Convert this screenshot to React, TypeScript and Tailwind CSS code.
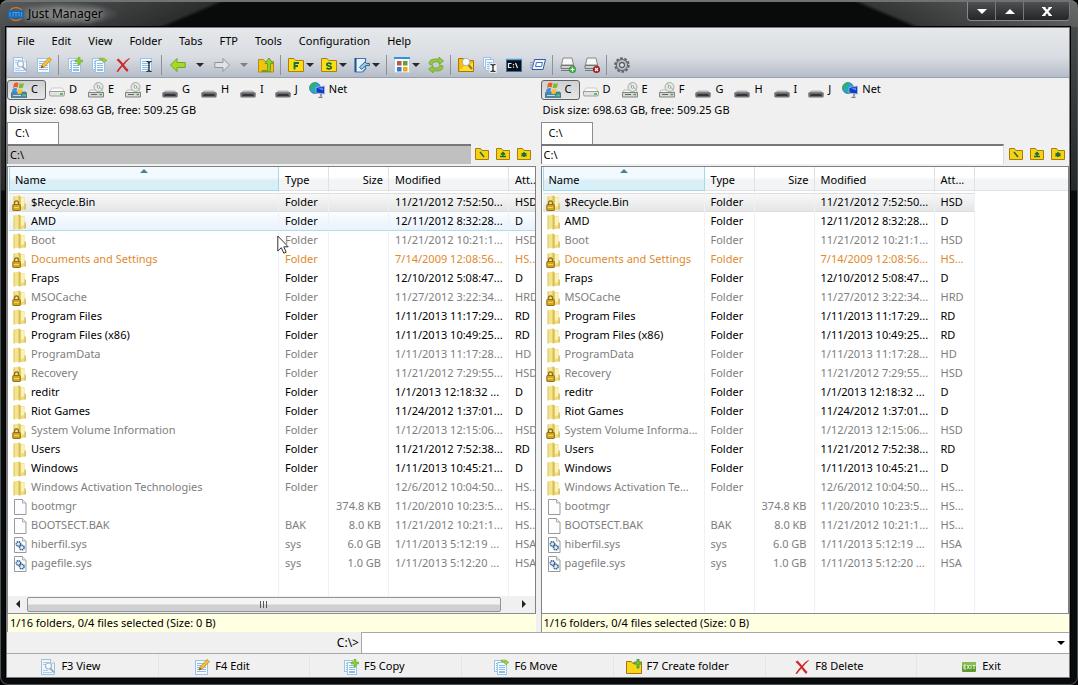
import { useState } from "react";
import type { ReactNode } from "react";

type Tone = "normal" | "hidden" | "link";
type Kind = "folder" | "locked" | "file" | "sys";

interface Entry {
  name: string;
  short?: string;
  kind: Kind;
  type: string;
  size: string;
  modified: string;
  attr: string;
  tone: Tone;
}

const ENTRIES: Entry[] = [
  { name: "$Recycle.Bin", kind: "locked", type: "Folder", size: "", modified: "11/21/2012 7:52:50...", attr: "HSD", tone: "normal" },
  { name: "AMD", kind: "folder", type: "Folder", size: "", modified: "12/11/2012 8:32:28...", attr: "D", tone: "normal" },
  { name: "Boot", kind: "folder", type: "Folder", size: "", modified: "11/21/2012 10:21:1...", attr: "HSD", tone: "hidden" },
  { name: "Documents and Settings", kind: "locked", type: "Folder", size: "", modified: "7/14/2009 12:08:56...", attr: "HS...", tone: "link" },
  { name: "Fraps", kind: "folder", type: "Folder", size: "", modified: "12/10/2012 5:08:47...", attr: "D", tone: "normal" },
  { name: "MSOCache", kind: "locked", type: "Folder", size: "", modified: "11/27/2012 3:22:34...", attr: "HRD", tone: "hidden" },
  { name: "Program Files", kind: "folder", type: "Folder", size: "", modified: "1/11/2013 11:17:29...", attr: "RD", tone: "normal" },
  { name: "Program Files (x86)", kind: "folder", type: "Folder", size: "", modified: "1/11/2013 10:49:25...", attr: "RD", tone: "normal" },
  { name: "ProgramData", kind: "folder", type: "Folder", size: "", modified: "1/11/2013 11:17:28...", attr: "HD", tone: "hidden" },
  { name: "Recovery", kind: "locked", type: "Folder", size: "", modified: "11/21/2012 7:29:55...", attr: "HSD", tone: "hidden" },
  { name: "reditr", kind: "folder", type: "Folder", size: "", modified: "1/1/2013 12:18:32 ...", attr: "D", tone: "normal" },
  { name: "Riot Games", kind: "folder", type: "Folder", size: "", modified: "11/24/2012 1:37:01...", attr: "D", tone: "normal" },
  { name: "System Volume Information", short: "System Volume Informa...", kind: "locked", type: "Folder", size: "", modified: "1/12/2013 12:15:06...", attr: "HSD", tone: "hidden" },
  { name: "Users", kind: "folder", type: "Folder", size: "", modified: "11/21/2012 7:52:38...", attr: "RD", tone: "normal" },
  { name: "Windows", kind: "folder", type: "Folder", size: "", modified: "1/11/2013 10:45:21...", attr: "D", tone: "normal" },
  { name: "Windows Activation Technologies", short: "Windows Activation Te...", kind: "folder", type: "Folder", size: "", modified: "12/6/2012 10:04:50...", attr: "HS...", tone: "hidden" },
  { name: "bootmgr", kind: "file", type: "", size: "374.8 KB", modified: "11/20/2010 10:23:5...", attr: "HS...", tone: "hidden" },
  { name: "BOOTSECT.BAK", kind: "file", type: "BAK", size: "8.0 KB", modified: "11/21/2012 10:21:1...", attr: "HS...", tone: "hidden" },
  { name: "hiberfil.sys", kind: "sys", type: "sys", size: "6.0 GB", modified: "1/11/2013 5:12:19 ...", attr: "HSA", tone: "hidden" },
  { name: "pagefile.sys", kind: "sys", type: "sys", size: "1.0 GB", modified: "1/11/2013 5:12:20 ...", attr: "HSA", tone: "hidden" },
];

const TONES: Record<Tone, string> = {
  normal: "text-black",
  hidden: "text-[#7e7e7e]",
  link: "text-[#e08a2c]",
};

function Svg({ children }: { children: ReactNode }) {
  return (
    <svg viewBox="0 0 16 16" className="size-4 shrink-0" aria-hidden="true">
      {children}
    </svg>
  );
}

function Sheet({ x = 1, y = 1, w = 12, h = 14 }: { x?: number; y?: number; w?: number; h?: number }) {
  return (
    <g>
      <rect x={x + 0.5} y={y + 0.5} width={w - 1} height={h - 1} fill="#f4faff" stroke="#9cc3e4" />
      <path
        d={`M${x + 2} ${y + 3.5}h${w - 4}M${x + 2} ${y + 5.5}h${w - 4}M${x + 2} ${y + 7.5}h${w - 4}M${x + 2} ${y + 9.5}h${w - 4}`}
        stroke="#8fbce4"
        strokeWidth="1"
      />
    </g>
  );
}

const ViewIcon = () => (
  <Svg>
    <path d="M1.500.500h9l4 3.500v11.500h-13z" fill="#eef6fd" stroke="#9dc0df" />
    <path d="M3 3.500h6M3 5.500h3M3 11.500h5M3 13.500h9" stroke="#a8cceb" />
    <circle cx="8.500" cy="7" r="3" fill="#f7fbff" stroke="#a3b4c5" strokeWidth="1.200" />
    <path d="m10.500 9.500 3.500 4" stroke="#93a4b5" strokeWidth="1.800" />
    <path d="M10.500.500v3.500h4" fill="#fff" stroke="#9dc0df" />
  </Svg>
);

const EditIcon = () => (
  <Svg>
    <Sheet x={1} y={1} w={13} h={15} />
    <path d="M3 12.500h9" stroke="#8fbce4" />
    <path d="m5 11 1-3 7-7.500 2.500 2.200L8 10z" fill="#f5c033" stroke="#c98b1a" strokeWidth=".8" />
    <path d="m5 11 .8-2.500L7.500 10z" fill="#6b4a1d" />
  </Svg>
);

const CopyIcon = () => (
  <Svg>
    <Sheet x={1} y={1} w={9} h={12} />
    <Sheet x={4} y={3} w={10} h={13} />
    <path d="M6 13.500h6" stroke="#8fbce4" />
    <path d="M11 0h2v3h3v2h-3v3h-2V5H8V3h3z" fill="#8ccf2b" stroke="#69a51c" strokeWidth=".5" />
  </Svg>
);

const MoveIcon = () => (
  <Svg>
    <Sheet x={1} y={1} w={9} h={12} />
    <Sheet x={4} y={3} w={10} h={13} />
    <path d="M6 13.500h6" stroke="#8fbce4" />
    <path d="M8 1h4q2.500 0 2.500 2H16l-3 3-2.500-3H12q0-.5-1-.5H8z" fill="#9bcf4a" stroke="#74a52d" strokeWidth=".5" />
  </Svg>
);

const DeleteIcon = () => (
  <Svg>
    <path d="M1.500 3 3.500 1.500Q6 4 8 6.500 11 2.500 14.500 1l.5.500Q11.500 4.500 9 8q2.500 3 4.500 5L12 15q-2.500-2.500-4.500-5.500-2.500 2.500-4.500 5.500l-1.500-.5Q4 10.500 6.500 8 4 5 1.500 3z" fill="#cf2a27" />
  </Svg>
);

const RenameIcon = () => (
  <Svg>
    <Sheet x={1} y={1} w={12} h={14} />
    <path d="M3 12.500h7" stroke="#8fbce4" />
    <path d="M7.500 4.500q2 0 2.500 1 .5-1 2.500-1M10 5v9M7.500 14.500q2 0 2.500-1 .5 1 2.500 1" fill="none" stroke="#111" strokeWidth="1.200" />
  </Svg>
);

const MultiRenameIcon = () => (
  <Svg>
    <Sheet x={1} y={0} w={8} h={11} />
    <Sheet x={3} y={2} w={9} h={12} />
    <rect x="7" y="6" width="8" height="10" fill="#f5f7fa" stroke="#b8c4d0" strokeWidth=".6" />
    <path d="M8.500 7.500q1.800 0 2.500.8.700-.8 2.500-.8M11 8v6M8.500 14.500q1.800 0 2.500-.8.700.8 2.500.8" fill="none" stroke="#111" strokeWidth="1.200" />
  </Svg>
);

const ArrowIcon = ({ forward = false }: { forward?: boolean }) => (
  <Svg>
    {forward ? (
      <path d="M15.500 8 9 1.500v4H.8v5H9v4z" fill="#dfe3e6" stroke="#8f9499" />
    ) : (
      <path d="M.5 8 7 1.500v4h8.200v5H7v4z" fill="#a5d928" stroke="#75a51c" />
    )}
  </Svg>
);

const UpIcon = () => (
  <Svg>
    <path d="M.5 2.500h5l1.500 2h8.500v10.500H.5z" fill="#f1c50f" stroke="#b98c12" />
    <path d="M4 13.500h5.500v-7H7L11 1l4 5.500h-2.500v8H4z" fill="#8ed02c" stroke="#5c951a" strokeWidth=".8" />
  </Svg>
);

const LetterFolder = ({ star = false }: { star?: boolean }) => (
  <Svg>
    <path d="M.5 1.500h5.500l1.500 2h8v11H.5z" fill="#fbdf12" stroke="#ad7e13" />
    {star ? (
      <path d="M10.500 7.300Q8.500 5.500 6.500 6.500q-1.300 1 0 2l3 1q1.500 1 0 2-2 1-4-.5" fill="none" stroke="#14703f" strokeWidth="1.800" />
    ) : (
      <path d="M6.500 12.500V6H11M6.500 9h3.500" fill="none" stroke="#14703f" strokeWidth="1.800" />
    )}
  </Svg>
);

const BookIcon = () => (
  <Svg>
    <path d="M1.500 1.500h10v10.500l-3 3h-7z" fill="#e6f1fb" stroke="#3f78b0" strokeWidth="1.200" />
    <path d="M1.500 1v14" stroke="#1e568f" strokeWidth="2" />
    <path d="m5.500 10 2 2.500L12 8.500h3.500V6.500h-3L11 5z" fill="#9cc8ea" stroke="#306792" />
  </Svg>
);

const GridIcon = () => (
  <Svg>
    <path d="M.5 1h15v14.500H.5z" fill="#f8fcff" stroke="#c3d2df" />
    <path d="M0 1h16" stroke="#2c94e8" strokeWidth="2" />
    <path d="M3 4h4.500v4.500H3z" fill="#c0563f" />
    <path d="M9 4h4.500v4.500H9z" fill="#6e9b2f" />
    <path d="M3 10h4.500v4.500H3z" fill="#3b76c4" />
    <path d="M9 10h4.500v4.500H9z" fill="#eea91d" />
  </Svg>
);

const RefreshIcon = () => (
  <Svg>
    <path d="M1 7q0-5 6-5h4V0l4.500 4L11 7.500V5H7Q4.500 5 4 8z" fill="#93c83e" stroke="#6a9b28" strokeWidth=".7" />
    <path d="M15 9q0 5-6 5H5v2L.5 12 5 8.500V11h4q2.500 0 3-3z" fill="#93c83e" stroke="#6a9b28" strokeWidth=".7" />
  </Svg>
);

const SearchIcon = () => (
  <Svg>
    <path d="M.5 1.500h5l1 2h9v11H.5z" fill="#f2bd0e" stroke="#a8760f" />
    <path d="m1 14 5-5 9-3v8z" fill="#fbe030" />
    <circle cx="8" cy="5" r="3.700" fill="#f5fcff" stroke="#b9b093" />
    <path d="m10.500 8 3.500 4" stroke="#a0762a" strokeWidth="2" />
  </Svg>
);

const ConsoleIcon = () => (
  <Svg>
    <rect x=".5" y="2.500" width="15" height="12" fill="#0a1015" stroke="#3b6f9d" />
    <path d="M0 2.500h16" stroke="#4aa1da" strokeWidth="1.500" />
    <path d="M5.500 6.500h-3v4h3M7.500 7v1.200M7.500 9.500v1.200M9.500 6l2 5" fill="none" stroke="#e3ecf2" strokeWidth="1.200" />
  </Svg>
);

const RunIcon = () => (
  <Svg>
    <path d="M4.500 2.500h11l-2.500 10H2z" fill="#eaf3ff" stroke="#335aa4" />
    <path d="M6.500 5.500h6l-1 4h-6z" fill="#fff" stroke="#4a6fb6" />
    <path d="M0 5.500h4M0 8h3M0 10.500h3" stroke="#8799b5" />
  </Svg>
);

const NetDriveIcon = ({ off = false }: { off?: boolean }) => (
  <Svg>
    <path d="M3 1h9l1.500 7h-12z" fill="#f7f7f7" stroke="#888" />
    <path d="M1 8.500h13v3H1z" fill="#cfd2d4" stroke="#777" />
    <path d="M1 13.500h10" stroke="#777" />
    <circle cx="12.500" cy="12.500" r="3.300" fill={off ? "#b01616" : "#3fb43b"} stroke={off ? "#770c0c" : "#277b27"} strokeWidth=".5" />
    {off ? (
      <path d="m11 11 3 3m0-3-3 3" stroke="#fff" strokeWidth="1.200" />
    ) : (
      <path d="M12.500 10.500v4M10.500 12.500h4" stroke="#fff" strokeWidth="1.200" />
    )}
  </Svg>
);

const GearIcon = () => (
  <Svg>
    <circle cx="8" cy="8" r="6.800" fill="none" stroke="#62686e" strokeWidth="2" strokeDasharray="2.700 1.570" />
    <circle cx="8" cy="8" r="5.600" fill="#bfc4c9" stroke="#656b70" strokeWidth="1.200" />
    <circle cx="8" cy="8" r="2.500" fill="#e4e7ea" stroke="#5c6166" strokeWidth="1.300" />
  </Svg>
);

const NewFolderIcon = () => (
  <Svg>
    <path d="M.5 2.500h5l1.500 2h8.500v10H.5z" fill="#f9d616" stroke="#a9740f" />
    <path d="M11 0h2v3h3v2h-3v4h-2V5H8V3h3z" fill="#7fc73a" stroke="#3d8a26" strokeWidth=".8" />
  </Svg>
);

const ExitIcon = () => (
  <Svg>
    <rect x="1" y="3" width="14" height="10" rx="1" fill="#5d9c2c" />
    <path d="M1 4q0-1 1-1h12q1 0 1 1v3H1z" fill="#86bd4e" />
    <path d="M5 6H3v4h2M3 8h2M6 6l2.500 4M8.500 6 6 10M10 6v4M11.500 6.500h3M13 6.500V10" fill="none" stroke="#f3faec" strokeWidth=".9" />
  </Svg>
);

const HardDisk = () => (
  <Svg>
    <path d="M3 6h10l2.500 4H.5z" fill="#fafafa" stroke="#b9bcb9" strokeWidth=".7" />
    <path d="M.5 9.500h15v3q0 1.500-1.500 1.500H2q-1.500 0-1.500-1.500z" fill="#e2e4e1" stroke="#898d88" strokeWidth=".8" />
    <path d="M11 12h3" stroke="#3cab37" strokeWidth="1.500" />
  </Svg>
);

const DiscDrive = () => (
  <Svg>
    <path d="M2 8h12l1.500 3H.5z" fill="#f4f4f4" stroke="#aaa" strokeWidth=".7" />
    <path d="M.5 10.500h15V15H.5z" fill="#d7d9d6" stroke="#777b76" strokeWidth=".9" />
    <path d="M3 12.500h6" stroke="#666" />
    <path d="M11.500 12.500h2.500" stroke="#3aa437" strokeWidth="1.400" />
    <circle cx="10.500" cy="5" r="4.500" fill="#e6e9e7" stroke="#979c98" strokeWidth=".8" />
    <path d="m10.500 5-2.500-4M10.500 5l4 2.500" stroke="#9fbf9d" />
    <circle cx="10.500" cy="5" r="1.300" fill="#fff" stroke="#8d918e" strokeWidth=".8" />
  </Svg>
);

const Removable = () => (
  <Svg>
    <path d="M3 8.500h10l2.500 3H.5z" fill="#b4b6b8" />
    <path d="M.3 11.500q0-1.300 1.200-1.300h13q1.200 0 1.200 1.300V14q0 1.500-1.500 1.500H1.800Q.3 15.500.3 14z" fill="#6c6e71" />
    <path d="M3 12h10l1 2H2z" fill="#333538" />
  </Svg>
);

const WindowsDisk = () => (
  <Svg>
    <path d="M1 10h14l1 3v2.500H0V13z" fill="#4b86a6" stroke="#345c73" strokeWidth=".6" />
    <path d="M2 13.500h8" stroke="#bfd9e5" />
    <path d="M11.500 13.500H15" stroke="#47dd4d" strokeWidth="1.500" />
    <path d="M3 1.500Q5.500 0 7.500 1L6.500 5.500Q4.500 4.500 2 6z" fill="#ed5b27" />
    <path d="M8.500 1.300q2.500 1 4.500-.3l-1 4.500q-2.500 1.300-4.500.3z" fill="#7dbb37" />
    <path d="M1.700 7Q4 5.500 6.200 6.500l-1 4.500Q3 10 .5 11.500z" fill="#3f90d7" />
    <path d="M7.200 7q2.500 1 4.500-.3l-1 4.500q-2.500 1.300-4.500.3z" fill="#fac02c" />
  </Svg>
);

const NetIcon = () => (
  <Svg>
    <circle cx="6" cy="6" r="5.500" fill="#26a3d8" stroke="#1b6d9f" strokeWidth=".7" />
    <path d="M1 4q2-3.500 6-3l-1 3-3 1-1 4Q.5 7 1 4zM6 7l3 1-1 3H5z" fill="#36b445" />
    <path d="M7 5.500 15.500 4v8L7 11z" fill="#123bc9" stroke="#a9bddd" strokeWidth=".8" />
    <path d="m9 6.500 5-1v3z" fill="#5287ef" />
    <path d="M12 12v2.500M9.500 15.500h4" stroke="#6c8293" strokeWidth="1.500" />
  </Svg>
);

function EntryIcon({ kind }: { kind: Kind }) {
  if (kind === "file" || kind === "sys") {
    return (
      <Svg>
        <path d="M2.500.500h8l3.500 3.500v11.500H2.500z" fill="#fdfdfd" stroke="#8c8f92" strokeWidth=".9" />
        <path d="M10.500.500v3.500H14" fill="#eee" stroke="#a3a6a9" strokeWidth=".9" />
        {kind === "sys" && (
          <g fill="#dcebf8" stroke="#35618f" strokeWidth="1.500">
            <circle cx="6.500" cy="7" r="2.200" strokeDasharray="1.400 .5" />
            <circle cx="9.800" cy="10.500" r="2.300" strokeDasharray="1.400 .5" />
          </g>
        )}
      </Svg>
    );
  }
  return (
    <Svg>
      <path d="M1.500 1.500 7 .5v14l-5.500 1z" fill="#f4e48f" />
      <path d="M1.500 1.500h1.500v13.700l-1.500.3z" fill="#e6d27a" />
      <path d="M7 2h5.500v12.500L7 15.500z" fill="#efdb7c" />
      <path d="M6.500.5 8.500 1v14l-2 .5z" fill="#d9be52" />
      <path d="M9 2.500h3V11L9 12z" fill="#fbf2b8" />
      <path d="M12.500 8q1.500 0 1.500 2v4.500h-2z" fill="#d9c366" />
      {kind === "locked" && (
        <g>
          <path d="M2.500 10V8q0-2.200 2-2.200t2 2.200v2" fill="none" stroke="#8b6f1c" strokeWidth="1.300" />
          <rect x=".8" y="9.500" width="7.500" height="6" rx=".5" fill="#d5a51d" stroke="#886816" strokeWidth=".9" />
          <path d="M2 12.500h5" stroke="#f4d568" />
        </g>
      )}
    </Svg>
  );
}

function Caret({ className = "text-[#26292d]" }: { className?: string }) {
  return (
    <svg viewBox="0 0 8 4" className={`h-1 w-2 shrink-0 ${className}`} aria-hidden="true">
      <path d="M0 0h8L4 4z" fill="currentColor" />
    </svg>
  );
}

function Tool({ label, children, menu = false }: { label: string; children: ReactNode; menu?: boolean }) {
  return (
    <button
      type="button"
      aria-label={label}
      className={
        menu
          ? "flex h-6 w-[33px] items-center gap-[2px] pl-[3px]"
          : "flex h-6 w-6 items-center justify-center"
      }
    >
      {children}
      {menu && <Caret />}
    </button>
  );
}

function Divider({ tight = false }: { tight?: boolean }) {
  return <span className={`ml-[2px] h-5 w-px bg-[#8d9299] ${tight ? "mr-[3px]" : "mr-1"}`} />;
}

function CaretTool({ label, muted = false }: { label: string; muted?: boolean }) {
  return (
    <button type="button" aria-label={label} className="flex h-6 w-5 items-center justify-center">
      {muted ? <Caret className="text-[#7d8185]" /> : <Caret />}
    </button>
  );
}

const MENUS = ["File", "Edit", "View", "Folder", "Tabs", "FTP", "Tools", "Configuration", "Help"];

function TitleBar() {
  const button = "flex h-[18px] items-center justify-center border-r border-[#77797b]";
  return (
    <header className="flex h-[27px] shrink-0 items-start justify-between rounded-t-lg border-t-2 border-[#6f7373] bg-[#090a0a] bg-[linear-gradient(157deg,#585b5b_0,#2c2e2e_84px,transparent_88px),linear-gradient(203deg,#6a6c6c_0,#343636_84px,transparent_88px)] pl-2">
      <div className="flex h-6 items-center gap-1 rounded-full bg-[radial-gradient(closest-side,rgba(150,152,152,0.7),rgba(130,132,132,0.5)_60%,transparent)] pr-4">
        <svg viewBox="0 0 16 16" className="size-4" aria-hidden="true">
          <path d="M2 4Q8-1 14 4M2 12q6 5 12 0" fill="none" stroke="#c8782e" strokeWidth="1.500" />
          <rect y="4" width="16" height="8.500" rx="1" fill="#1769b4" />
          <path d="M2 6v4.500M5 10.500V6.500h3v4M8 6.500h3v4M13.500 6v4.500" fill="none" stroke="#4f97d2" strokeWidth="1.200" />
        </svg>
        <h1 className="text-xs text-black [text-shadow:0_0_5px_#aaa,0_0_8px_#999]">Just Manager</h1>
      </div>
      <div className="mr-2 flex rounded-b border-b border-l border-[#88898b] bg-linear-to-b from-[#4e5051] to-[#242627]">
        <button type="button" aria-label="Minimize" className={`${button} w-7`}>
          <svg viewBox="0 0 10 5" className="h-[5px] w-[10px]" aria-hidden="true">
            <path d="M0 0h10L5 5z" fill="#fff" />
          </svg>
        </button>
        <button type="button" aria-label="Maximize" className={`${button} w-7`}>
          <svg viewBox="0 0 10 5" className="h-[5px] w-[10px]" aria-hidden="true">
            <path d="M0 5h10L5 0z" fill="#fff" />
          </svg>
        </button>
        <button type="button" aria-label="Close" className={`${button} w-[46px] rounded-br`}>
          <svg viewBox="0 0 10 9" className="h-[9px] w-[10px]" aria-hidden="true">
            <path d="m1.500.500 7 8m0-8-7 8" stroke="#fff" strokeWidth="2.300" />
            <path d="M0 .5h3.500M6.500.500H10M0 8.500h3.500M6.500 8.500H10" stroke="#fff" />
          </svg>
        </button>
      </div>
    </header>
  );
}

function Toolbar() {
  return (
    <div className="flex h-6 shrink-0 items-center pl-px">
      <Tool label="View file"><ViewIcon /></Tool>
      <Tool label="Edit file"><EditIcon /></Tool>
      <Divider />
      <Tool label="Copy"><CopyIcon /></Tool>
      <Tool label="Move"><MoveIcon /></Tool>
      <Tool label="Delete"><DeleteIcon /></Tool>
      <Tool label="Rename"><RenameIcon /></Tool>
      <Divider />
      <Tool label="Back"><ArrowIcon /></Tool>
      <CaretTool label="Back history" />
      <Tool label="Forward"><ArrowIcon forward /></Tool>
      <CaretTool label="Forward history" muted />
      <Tool label="Parent folder"><UpIcon /></Tool>
      <Divider />
      <Tool label="Favorites" menu><LetterFolder /></Tool>
      <Tool label="Special folders" menu><LetterFolder star /></Tool>
      <Tool label="Sessions" menu><BookIcon /></Tool>
      <Divider />
      <Tool label="View mode" menu><GridIcon /></Tool>
      <Tool label="Refresh"><RefreshIcon /></Tool>
      <Divider tight />
      <Tool label="Search"><SearchIcon /></Tool>
      <Tool label="Multi-rename"><MultiRenameIcon /></Tool>
      <Tool label="Command prompt"><ConsoleIcon /></Tool>
      <Tool label="Run"><RunIcon /></Tool>
      <Divider tight />
      <Tool label="Map network drive"><NetDriveIcon /></Tool>
      <Tool label="Disconnect network drive"><NetDriveIcon off /></Tool>
      <Divider tight />
      <Tool label="Settings"><GearIcon /></Tool>
    </div>
  );
}

const DRIVES: { name: string; icon: ReactNode }[] = [
  { name: "D", icon: <HardDisk /> },
  { name: "E", icon: <DiscDrive /> },
  { name: "F", icon: <DiscDrive /> },
  { name: "G", icon: <Removable /> },
  { name: "H", icon: <Removable /> },
  { name: "I", icon: <Removable /> },
  { name: "J", icon: <Removable /> },
  { name: "Net", icon: <NetIcon /> },
];

function Drives() {
  return (
    <div className="flex h-[23px] shrink-0 items-center gap-[11px]">
      <button
        type="button"
        aria-pressed="true"
        className="-mr-2 flex h-5 w-[39px] items-center gap-1 rounded-[3px] border border-[#5f6163] bg-linear-to-b from-[#cfd0d1] to-[#e6e6e6] pl-[3px]"
      >
        <WindowsDisk />
        C
      </button>
      {DRIVES.map((drive) => (
        <button type="button" key={drive.name} className="flex items-center gap-1">
          {drive.icon}
          {drive.name}
        </button>
      ))}
    </div>
  );
}

function PathButton({ label, d }: { label: string; d: string }) {
  return (
    <button type="button" aria-label={label} className="flex w-[21px] items-center justify-center">
      <svg viewBox="0 0 14 12" className="h-3 w-[14px]" aria-hidden="true">
        <path d="M.5.500h5l1.500 2h6.500v9H.5z" fill="#f5d313" stroke="#a87d10" />
        <path d={d} fill="none" stroke="#1a6b3d" strokeWidth="1.500" />
      </svg>
    </button>
  );
}

function FileTable({ narrow }: { narrow: boolean }) {
  const head = "border-r border-b border-[#dfe1e4] bg-linear-to-b from-white from-45% to-[#f3f4f6] to-55% pt-[3px] pl-[6px] text-left font-normal whitespace-nowrap";
  const cell = "overflow-hidden border-r border-[#eef1f5] whitespace-nowrap";
  return (
    <table className={narrow ? "w-full table-fixed border-separate border-spacing-0" : "w-[568px] table-fixed border-separate border-spacing-0"}>
      <colgroup>
        <col className={narrow ? "w-[162px]" : "w-[270px]"} />
        <col className="w-[50px]" />
        <col className="w-[60px]" />
        <col className="w-[120px]" />
        <col className="w-10" />
        <col />
      </colgroup>
      <thead>
        <tr className="h-6">
          <th
            scope="col"
            aria-sort="ascending"
            className="relative border-x border-b border-[#a3d8ec] bg-linear-to-b from-[#f3fafd] from-45% to-[#d9eff8] to-60% px-[5px] pt-[3px] text-left font-normal"
          >
            Name
            <svg viewBox="0 0 8 4" className="absolute top-[2px] left-1/2 h-1 w-2 -translate-x-1/2" aria-hidden="true">
              <path d="M0 4h8L4 0z" fill="#4a7f95" />
            </svg>
          </th>
          <th scope="col" className={head}>Type</th>
          <th scope="col" className={head}>
            <span className="block pr-[5px] text-right">Size</span>
          </th>
          <th scope="col" className={head}>Modified</th>
          <th scope="col" className={head}>Att...</th>
          <td className="border-b border-[#dfe1e4] bg-linear-to-b from-white from-45% to-[#f3f4f6] to-55%" />
        </tr>
      </thead>
      <tbody>
        <tr className="h-[2px]">
          {[0, 1, 2, 3, 4].map((n) => (
            <td key={n} className="border-r border-[#eef1f5]" />
          ))}
          <td />
        </tr>
        {ENTRIES.map((entry, row) => {
          const mark =
            row === 0
              ? "border-y border-y-[#dedede] bg-linear-to-b from-[#f8f8f8] to-[#e4e5e6]"
              : row === 1 && !narrow
                ? "border-y border-t-[#fafcff] border-b-[#b4dcec] bg-linear-to-b from-[#fafcff] to-[#eaf2fc]"
                : "";
          return (
            <tr key={entry.name} className={`h-[19px] ${TONES[entry.tone]}`}>
              <td className={`${cell} pl-[3px] ${mark}`}>
                <span className="flex items-center gap-[3px]">
                  <EntryIcon kind={entry.kind} />
                  {narrow && entry.short ? entry.short : entry.name}
                </span>
              </td>
              <td className={`${cell} pl-[6px] ${mark}`}>{entry.type}</td>
              <td className={`${cell} pr-[7px] text-right ${mark}`}>{entry.size}</td>
              <td className={`${cell} pl-[6px] ${mark}`}>{entry.modified}</td>
              <td className={`${cell} pl-[6px] ${mark}`}>{entry.attr}</td>
              <td />
            </tr>
          );
        })}
        <tr>
          {[0, 1, 2, 3, 4].map((n) => (
            <td key={n} className="border-r border-[#eef1f5]" />
          ))}
          <td />
        </tr>
      </tbody>
    </table>
  );
}

function Scrollbar() {
  return (
    <div className="flex h-[17px] shrink-0 items-center bg-[#f0f0f0] pb-px">
      <button type="button" aria-label="Scroll left" className="flex w-[19px] justify-center">
        <svg viewBox="0 0 4 8" className="h-2 w-1" aria-hidden="true"><path d="M4 0v8L0 4z" fill="#222" /></svg>
      </button>
      <div className="flex h-[15px] flex-1 items-center justify-center gap-[2px] rounded-[2px] border border-[#919395] bg-linear-to-b from-[#f4f4f4] from-45% to-[#cfd0d2] to-55%">
        <span className="h-[7px] w-px bg-[#55585b]" />
        <span className="h-[7px] w-px bg-[#55585b]" />
        <span className="h-[7px] w-px bg-[#55585b]" />
      </div>
      <button type="button" aria-label="Scroll right" className="ml-3 flex w-[22px] justify-center">
        <svg viewBox="0 0 4 8" className="h-2 w-1" aria-hidden="true"><path d="M0 0v8l4-4z" fill="#222" /></svg>
      </button>
    </div>
  );
}

interface PaneProps {
  id: string;
  narrow?: boolean;
  active?: boolean;
}

function Pane({ id, narrow = false, active = false }: PaneProps) {
  const [path, setPath] = useState("C:\\");
  return (
    <section className="flex min-w-0 flex-1 flex-col">
      <Drives />
      <p className="h-[21px] shrink-0 pl-[2px] leading-[18px]">Disk size: 698.63 GB, free: 509.25 GB</p>
      <div className="flex h-[22px] shrink-0">
        <button type="button" className="w-[52px] border border-b-0 border-[#8b8d90] bg-white pl-[7px] text-left">
          C:\
        </button>
      </div>
      <div className="mb-[2px] flex h-5 shrink-0">
        <input
          id={id}
          aria-label="Path"
          value={path}
          onChange={(event) => setPath(event.target.value)}
          className={`min-w-0 flex-1 border-t-2 border-l border-[#75777a] pl-[2px] outline-none ${active ? "bg-[#c0c0c0]" : "border-r border-r-[#dcdcdc] bg-white"}`}
        />
        <div className="mx-px flex">
          <PathButton label="Browse" d="m5 4 4 5" />
          <PathButton label="Parent" d="M4 8.500h6M7 8.500V4.500M5 6.500l2-2 2 2" />
          <PathButton label="Favorite" d="M7 4v5M4.500 5.500l5 2.500M9.500 5.500l-5 2.500" />
        </div>
      </div>
      <div className="flex min-h-0 flex-1 flex-col border border-[#7e8083] border-b-[#8a8c8f] bg-white">
        <div className="grid min-h-0 flex-1 overflow-hidden pl-px">
          <FileTable narrow={narrow} />
        </div>
        {!narrow && <Scrollbar />}
      </div>
      <p className="h-[18px] shrink-0 border-l border-[#8b8d90] bg-[#ffffe1] pl-[2px] leading-[18px]">
        1/16 folders, 0/4 files selected (Size: 0 B)
      </p>
    </section>
  );
}

const ACTIONS: { label: string; icon: ReactNode }[] = [
  { label: "F3 View", icon: <ViewIcon /> },
  { label: "F4 Edit", icon: <EditIcon /> },
  { label: "F5 Copy", icon: <CopyIcon /> },
  { label: "F6 Move", icon: <MoveIcon /> },
  { label: "F7 Create folder", icon: <NewFolderIcon /> },
  { label: "F8 Delete", icon: <DeleteIcon /> },
  { label: "Exit", icon: <ExitIcon /> },
];

export default function App() {
  const [command, setCommand] = useState("");
  return (
    <div className="relative h-screen min-h-[600px] overflow-hidden bg-black font-['Noto_Sans','Open_Sans',sans-serif] text-[11px] text-black">
      <div className="flex h-full flex-col rounded-lg bg-[linear-gradient(#4c4e4e,#26282a_190px,#0a0b0c_191px)] inset-ring inset-ring-[#505355]">
        <TitleBar />
        <main className="mr-2 mb-[7px] ml-[6px] flex min-h-0 flex-1 flex-col border border-[#7b7e80] bg-[#f0f0f0] outline outline-black">
          <div className="shrink-0 border-b border-[#98a1ab] bg-linear-to-b from-[#e6e8ea] via-[#d8dce2] via-60% to-[#b5bdc8] pt-px">
            <nav className="flex h-6 items-center gap-[17px] pl-[10px]">
              {MENUS.map((menu) => (
                <button type="button" key={menu}>{menu}</button>
              ))}
            </nav>
            <Toolbar />
          </div>
          <div className="flex min-h-0 flex-1 gap-[5px]">
            <Pane id="left-path" active />
            <Pane id="right-path" narrow />
          </div>
          <div className="flex h-[22px] shrink-0 border-b border-[#a5a7a9]">
            <label htmlFor="command" className="w-1/3 pr-[2px] text-right text-xs leading-[21px]">C:\&gt;</label>
            <input
              id="command"
              value={command}
              onChange={(event) => setCommand(event.target.value)}
              className="min-w-0 flex-1 border-t border-l border-[#a5a7a9] bg-white px-1 outline-none"
            />
            <button type="button" aria-label="Command history" className="flex w-4 items-center justify-center border-t border-[#a5a7a9] bg-white">
              <Caret className="text-black" />
            </button>
          </div>
          <footer className="grid h-[23px] shrink-0 grid-cols-7">
            {ACTIONS.map((action) => (
              <button
                type="button"
                key={action.label}
                className="flex items-center justify-center gap-[5px] border-r border-[#e6e6e6] pt-[2px] pr-6 last:border-r-0"
              >
                {action.icon}
                {action.label}
              </button>
            ))}
          </footer>
        </main>
      </div>
      <svg viewBox="0 0 12 19" className="pointer-events-none absolute top-[235px] left-[277px] h-[19px] w-3" aria-hidden="true">
        <path d="M.8 1v15l3.500-3.300 2.500 5.500 2.400-1-2.400-5.400h4.400z" fill="#fff" stroke="#333" />
      </svg>
    </div>
  );
}
